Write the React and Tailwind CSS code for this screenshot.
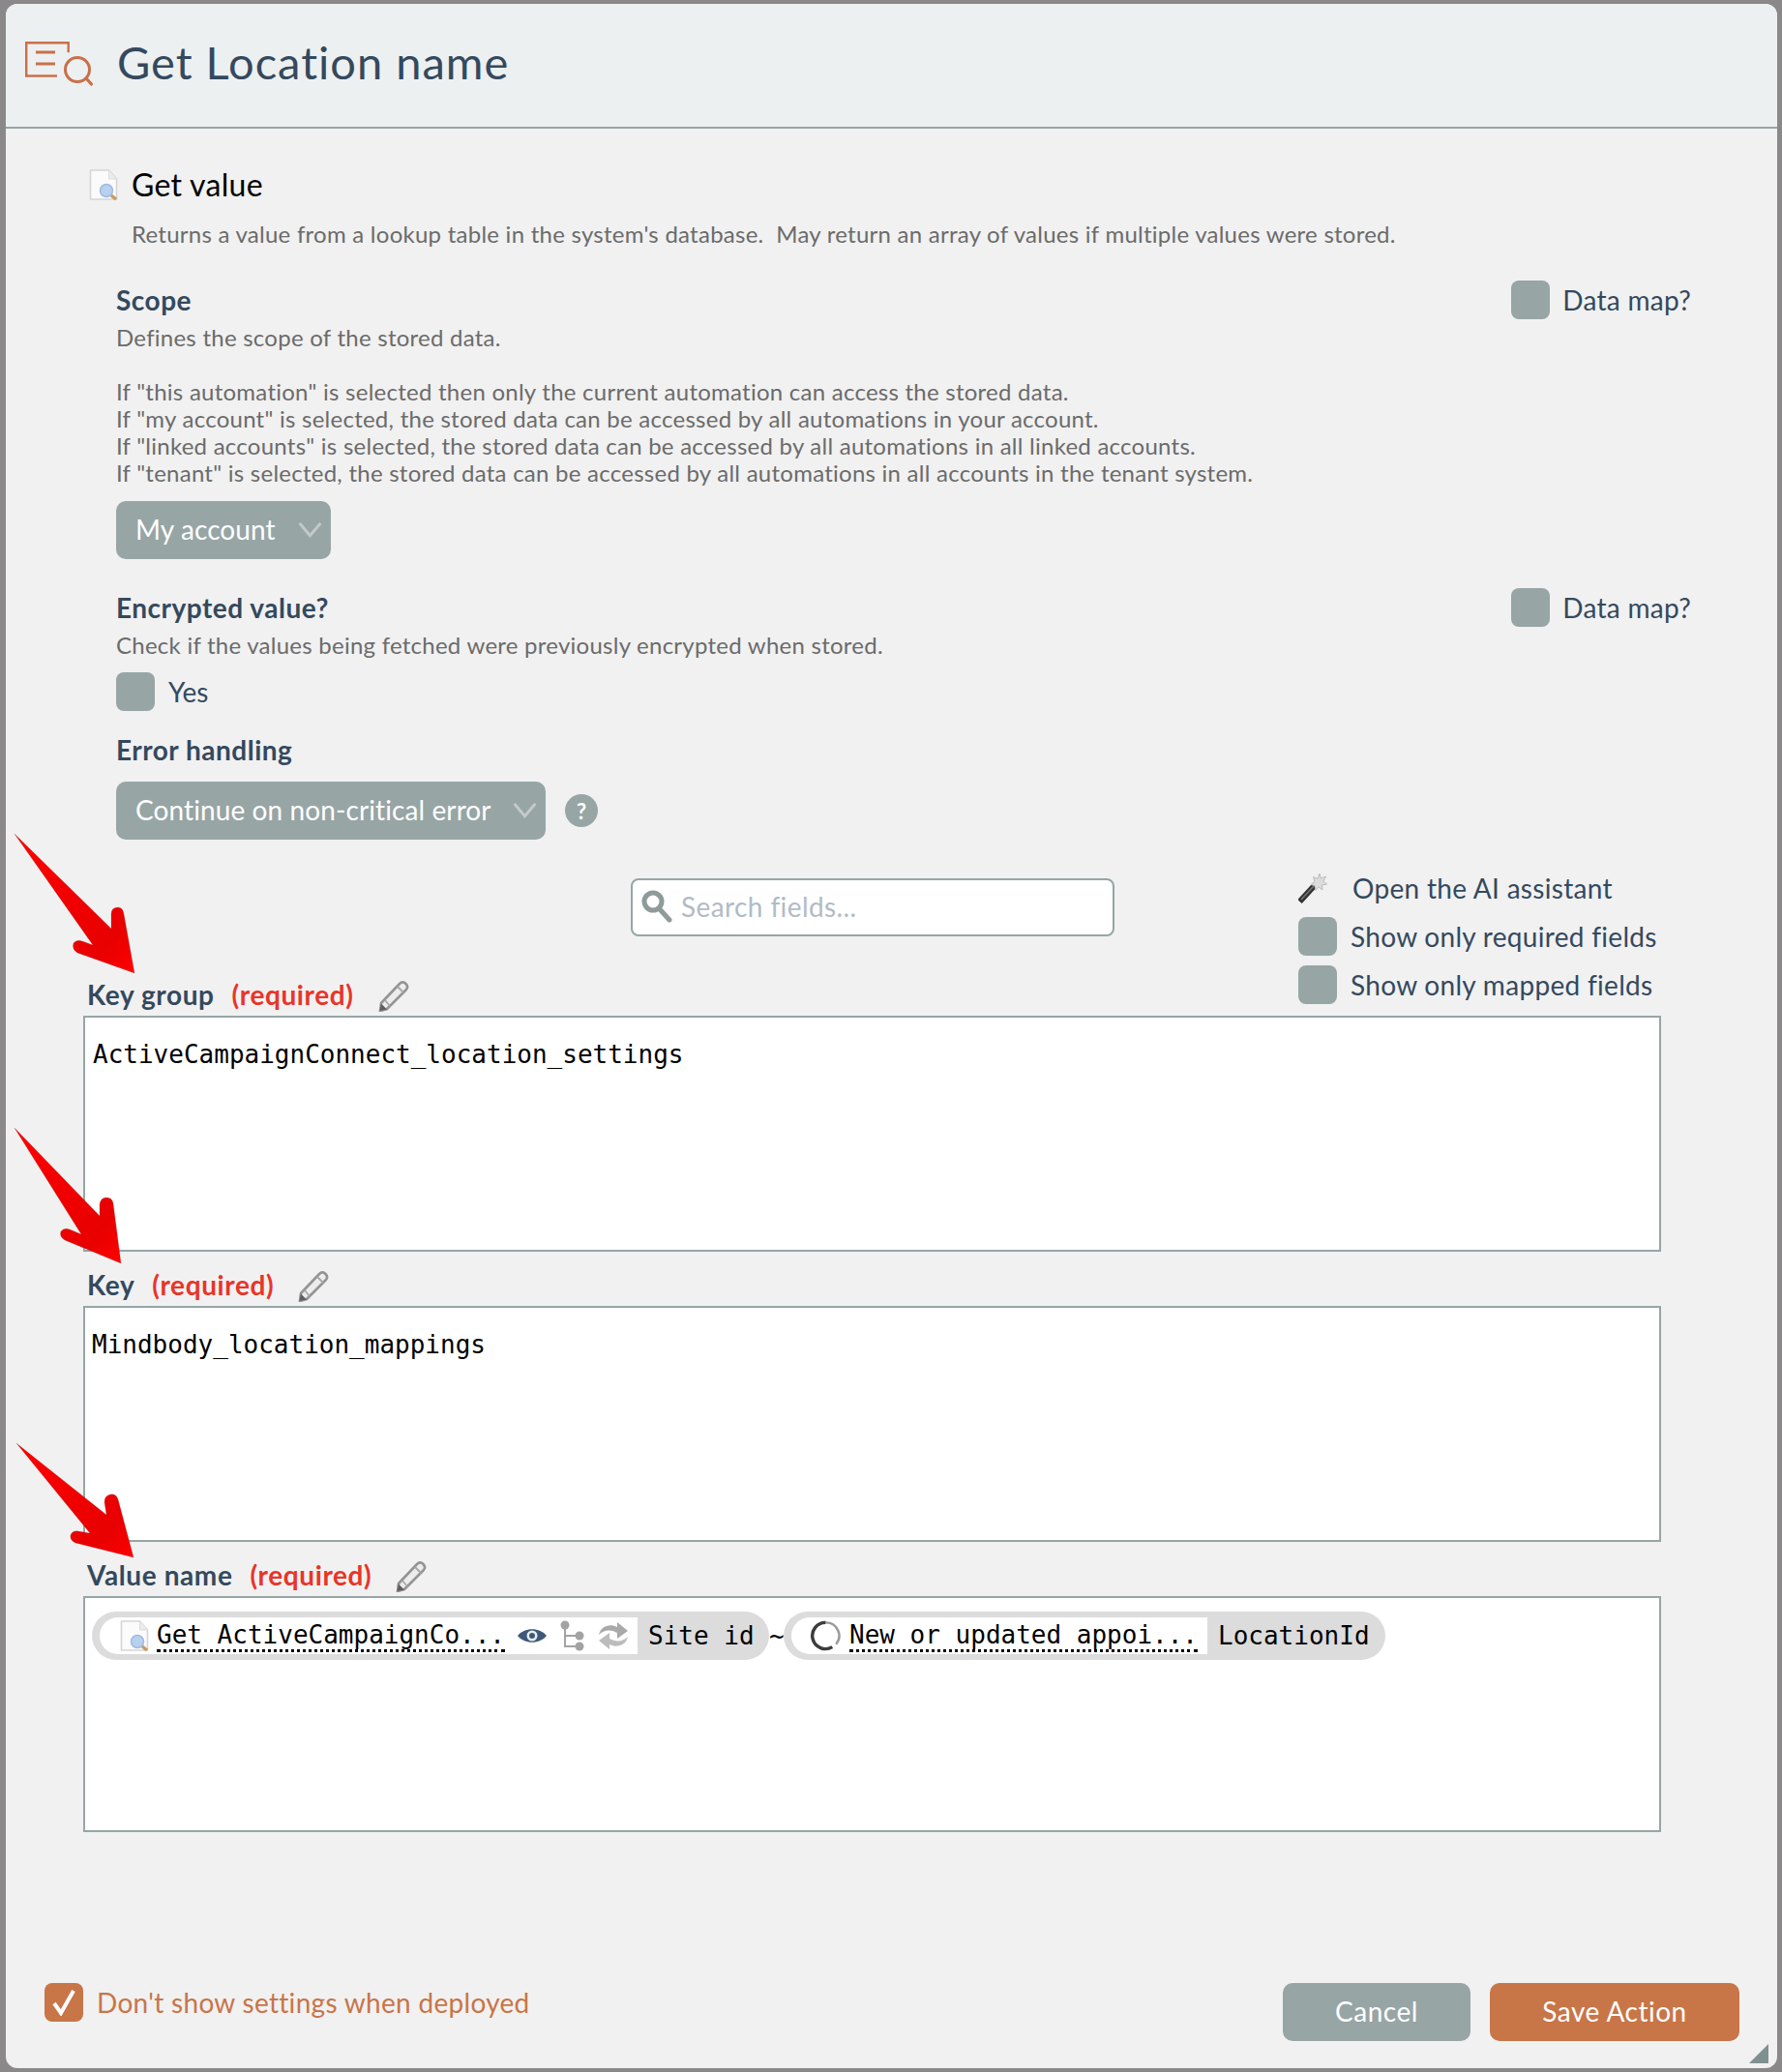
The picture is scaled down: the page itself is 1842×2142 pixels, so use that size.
import React from 'react';

const SANS = { fontFamily: 'Lato, sans-serif' };

// Small document with magnifier, used for the "Get value" action
const DocIcon = ({ className }) => (
    <svg viewBox="0 0 30 32" className={className}>
        <path d="M1.5 1h19l8 9v21h-27z" fill="#fbfbfb" stroke="#d5d5d5" strokeWidth="1.6" />
        <path d="M20.5 1v9h8" fill="#ececec" stroke="#dcdcdc" strokeWidth="1" />
        <circle cx="18" cy="22" r="6.5" fill="#b9d0ee" stroke="#9dbbe3" strokeWidth="1.5" />
        <path d="M23 27l5 4" stroke="#c89a5f" strokeWidth="3.5" />
    </svg>
);

const PencilIcon = () => (
    <svg viewBox="0 0 32 32" className="w-[32px] h-[32px] ml-[25px] mt-[4px] shrink-0">
        <path d="M3 23L22 3c2-2 4.500-2 6.500 0s2 4.500 0 6.500L9 29l-7 2z" fill="#ececec" stroke="#949494" strokeWidth="2.600" />
        <path d="M20 6l6 6M7 20l5 6" stroke="#a8a8a8" strokeWidth="1.800" />
        <path d="M1.500 31l1.500-7.500 6 6z" fill="#5f5f5f" />
    </svg>
);

const Check = () => <span className="w-[40px] h-[40px] rounded-[8px] bg-[#97a5a5] shrink-0 block" />;

const Chevron = ({ className }) => (
    <svg viewBox="0 0 26 18" className={className} fill="none" stroke="#c4c9c9" strokeWidth="3.2">
        <path d="M1.500 2L13 15.500 24.500 2" />
    </svg>
);

// paths are in page coordinates, the viewBox picks the region
const Arrow = ({ className, viewBox, d }) => (
    <svg viewBox={viewBox} className={className}>
        <defs>
            <linearGradient id="arrowRed" x1="0" y1="0" x2="1" y2="1">
                <stop offset="0" stopColor="#ff0000" />
                <stop offset="0.78" stopColor="#e80000" />
                <stop offset="1" stopColor="#ff0000" />
            </linearGradient>
        </defs>
        <path d={d} fill="url(#arrowRed)" stroke="#7a2a2a" strokeOpacity="0.35" strokeWidth="0.6" />
    </svg>
);

const FieldLabel = ({ name }) => (
    <div className="flex items-center h-[32px] mb-[6px] pl-[4px] text-[28px] font-bold tracking-[0.6px] text-[#34495e]">
        <span>{name}</span>
        <span className="ml-[18px] text-[#e8352a]">(required)</span>
        <PencilIcon />
    </div>
);

const FieldBox = ({ children }) => (
    <div className="h-[244px] border-2 border-[#97a5a5] bg-white px-[7px] pt-[14px] text-[26px] leading-[38px] text-black" style={{ fontFamily: '"DejaVu Sans Mono", monospace' }}>
        {children}
    </div>
);

const Ref = ({ icon, title, extras, value, className, whiteWidth, iconPad }) => (
    <span className={`flex items-center h-[50px] rounded-full bg-[#dcdcdc] pl-[8px] shrink-0 ${className}`}>
        <span className={`flex items-center h-[38px] bg-white rounded-l-full ${whiteWidth} ${iconPad}`}>
            {icon}
            <span className="border-b-[3px] border-dotted border-black leading-[28px] h-[32px] mt-[2px] ml-[8px] whitespace-pre">{title}</span>
            {extras}
        </span>
        <span className="ml-[11px]">{value}</span>
    </span>
);

const App = () => {
    return (
        <div className="h-[2142px] bg-[#8a8888] pl-[6px] pr-[5px] pt-[4px] pb-[4px]" style={SANS}>
            <div className="relative h-full rounded-[12px] bg-[#f1f1f1] flex flex-col overflow-hidden">
                {/* Header */}
                <div className="h-[129px] shrink-0 bg-[#edf0f1] border-b-2 border-[#97a5a5] flex items-center pl-[20px] pb-[6px]">
                    <svg viewBox="0 0 70 46" className="w-[70px] h-[46px] mt-[2px]" fill="none" stroke="#c8704a" strokeWidth="2.4">
                        <path d="M33 35.500H1.200V1.200h43.500v10" />
                        <path d="M11 11h20M11 23h20" strokeWidth="3" />
                        <circle cx="54" cy="29" r="12.500" strokeWidth="3" />
                        <path d="M63 38l6.500 7" strokeWidth="3.200" />
                    </svg>
                    <h1 className="ml-[25px] text-[47px] font-normal text-[#34495e] tracking-[1px]">Get Location name</h1>
                </div>

                {/* Body */}
                <div className="flex-1 pl-[80px] pr-[120px]">
                    <div className="flex items-center h-[32px] mt-[42px] ml-[6px] text-[32px] tracking-[0.3px] text-black">
                        <DocIcon className="w-[30px] h-[32px]" />
                        <span className="ml-[14px]">Get value</span>
                    </div>
                    <p className="ml-[50px] mt-[19px] h-[32px] text-[24px] leading-[32px] tracking-[0.25px] text-[#6b6b6b] whitespace-pre-wrap">Returns a value from a lookup table in the system's database.  May return an array of values if multiple values were stored.</p>

                    <div className="ml-[34px] mr-[-31px]">
                        <div className="flex justify-between items-center h-[40px] mt-[32px]">
                            <span className="text-[28px] font-bold tracking-[0.5px] text-[#34495e]">Scope</span>
                            <span className="flex items-center gap-[13px] text-[28px] tracking-[0.3px] text-[#34495e]"><Check />Data map?</span>
                        </div>
                        <p className="mt-[5px] text-[24px] leading-[28px] tracking-[0.25px] text-[#6b6b6b]">Defines the scope of the stored data.</p>
                        <div className="mt-[28px] text-[24px] leading-[28px] tracking-[0.25px] text-[#6b6b6b]">
                            <p>If "this automation" is selected then only the current automation can access the stored data.</p>
                            <p>If "my account" is selected, the stored data can be accessed by all automations in your account.</p>
                            <p>If "linked accounts" is selected, the stored data can be accessed by all automations in all linked accounts.</p>
                            <p>If "tenant" is selected, the stored data can be accessed by all automations in all accounts in the tenant system.</p>
                        </div>
                        <div className="flex items-center justify-between w-[222px] h-[60px] mt-[15px] rounded-[10px] bg-[#97a5a5] pl-[20px] pr-[9px] pb-[2px] text-[28px] tracking-[0.1px] text-white">
                            My account <Chevron className="w-[25px] h-[17px]" />
                        </div>

                        <div className="flex justify-between items-center h-[40px] mt-[30px]">
                            <span className="text-[28px] font-bold tracking-[0.5px] text-[#34495e]">Encrypted value?</span>
                            <span className="flex items-center gap-[13px] text-[28px] tracking-[0.3px] text-[#34495e]"><Check />Data map?</span>
                        </div>
                        <p className="mt-[5px] text-[24px] leading-[28px] tracking-[0.25px] text-[#6b6b6b]">Check if the values being fetched were previously encrypted when stored.</p>
                        <div className="flex items-center gap-[14px] mt-[14px] h-[40px] text-[28px] text-[#34495e]"><Check />Yes</div>

                        <div className="mt-[20px] h-[40px] flex items-center text-[28px] font-bold tracking-[0.5px] text-[#34495e]">Error handling</div>
                        <div className="flex items-center mt-[13px]">
                            <div className="flex items-center justify-between w-[444px] h-[60px] rounded-[10px] bg-[#97a5a5] pl-[20px] pr-[9px] pb-[2px] text-[28px] tracking-[0.1px] text-white">
                                Continue on non-critical error <Chevron className="w-[25px] h-[17px]" />
                            </div>
                            <span className="ml-[20px] w-[34px] h-[34px] rounded-full bg-[#97a5a5] text-white text-[22px] font-bold flex items-center justify-center">?</span>
                        </div>
                    </div>

                    {/* Filters and first label */}
                    <div className="flex justify-between h-[152px] mt-[30px]">
                        <div className="flex flex-col justify-between">
                            <div className="ml-[566px] mt-[10px] flex items-center w-[500px] h-[60px] rounded-[8px] border-2 border-[#97a5a5] bg-white pl-[9px] pb-[2px] text-[28px] tracking-[0.4px] text-[#b1bbc6]">
                                <svg viewBox="0 0 32 34" className="w-[32px] h-[34px]" fill="none">
                                    <circle cx="12" cy="12" r="9" stroke="#8f9a9a" strokeWidth="5" />
                                    <path d="M19 20l10 11" stroke="#8f9a9a" strokeWidth="5" strokeLinecap="round" />
                                </svg>
                                <span className="ml-[9px]">Search fields...</span>
                            </div>
                            <FieldLabel name="Key group" />
                        </div>
                        <div className="text-[28px] tracking-[0.3px] text-[#34495e] w-[375px] shrink-0">
                            <div className="flex items-center h-[40px]">
                                <svg viewBox="0 0 30 32" className="w-[30px] h-[32px]">
                                    <path d="M1.500 30L18 12" stroke="#333" strokeWidth="6" />
                                    <path d="M3 28L16 14" stroke="#777" strokeWidth="1.500" />
                                    <path d="M22 1l1.500 5 5-2-2.500 5 3.500 3-5 1 .5 5-4-3-3 3.500-1-5-4-1 4-3-1.500-5 4.500 2z" fill="#dcdcdc" stroke="#bdbdbd" strokeWidth="1" />
                                </svg>
                                <span className="ml-[26px]">Open the AI assistant</span>
                            </div>
                            <div className="flex items-center gap-[14px] h-[40px] mt-[10px]"><Check />Show only required fields</div>
                            <div className="flex items-center gap-[14px] h-[40px] mt-[10px]"><Check />Show only mapped fields</div>
                        </div>
                    </div>

                    {/* Fields */}
                    <FieldBox><div className="ml-[1px] mt-[5px]">ActiveCampaignConnect_location_settings</div></FieldBox>
                    <div className="mt-[18px]">
                        <FieldLabel name="Key" />
                        <FieldBox><div className="mt-[5px]">Mindbody_location_mappings</div></FieldBox>
                    </div>
                    <div className="mt-[18px]">
                        <FieldLabel name="Value name" />
                        <FieldBox>
                            <div className="flex items-center">
                                <Ref
                                    className="w-[700px]"
                                    whiteWidth="w-[556px]"
                                    iconPad="pl-[21px]"
                                    icon={<DocIcon className="w-[30px] h-[34px] shrink-0" />}
                                    title="Get ActiveCampaignCo..."
                                    extras={
                                        <span className="flex items-center">
                                            <svg viewBox="0 0 32 20" className="w-[32px] h-[20px] ml-[12px]">
                                                <path d="M1 10C8 1 24 1 31 10 24 19 8 19 1 10z" fill="#3f5878" />
                                                <circle cx="16" cy="10" r="5.500" fill="#e8edf3" />
                                                <circle cx="16" cy="10" r="3" fill="#3f5878" />
                                            </svg>
                                            <svg viewBox="0 0 26 32" className="w-[26px] h-[32px] ml-[13px]" fill="#a3a3a3">
                                                <path d="M5 5v22h14M5 16h14" fill="none" stroke="#a3a3a3" strokeWidth="2" />
                                                <circle cx="5" cy="5" r="4.500" />
                                                <circle cx="20" cy="16" r="4.500" />
                                                <circle cx="20" cy="27" r="4.500" />
                                            </svg>
                                            <svg viewBox="0 0 32 32" className="w-[32px] h-[32px] ml-[13px]">
                                                <path d="M1 15C3 6 12 3 20 7V2l11 9-11 8v-6C13 9 6 10 1 15z" fill="#a9a9a9" />
                                                <path d="M31 17c-2 9-11 12-19 8v5L1 21l11-8v6c7 4 14 3 19-2z" fill="#bcbcbc" />
                                            </svg>
                                        </span>
                                    }
                                    value="Site id"
                                />
                                <span className="w-[15px] text-center shrink-0">~</span>
                                <Ref
                                    className="w-[622px]"
                                    whiteWidth="w-[430px]"
                                    iconPad="pl-[19px]"
                                    icon={
                                        <svg viewBox="0 0 34 36" className="w-[33px] h-[36px] shrink-0" fill="none">
                                            <path d="M17 4A14 14 0 0 1 28 27" stroke="#9a9a9a" strokeWidth="2.500" />
                                            <path d="M17 4A14 14 0 1 0 24 30" stroke="#3c3c3c" strokeWidth="3.500" />
                                        </svg>
                                    }
                                    title="New or updated appoi..."
                                    value="LocationId"
                                />
                            </div>
                        </FieldBox>
                    </div>
                </div>

                {/* Footer */}
                <div className="flex items-start justify-between h-[88px] shrink-0 pl-[40px] pr-[39px]">
                    <div className="flex items-center gap-[14px] text-[28px] tracking-[0.3px] text-[#c87548] h-[40px]">
                        <span className="w-[40px] h-[40px] rounded-[8px] bg-[#c87548] flex items-center justify-center">
                            <svg viewBox="0 0 24 28" className="w-[24px] h-[28px]" fill="none" stroke="white" strokeWidth="4">
                                <path d="M2 15l7 10L22 2" />
                            </svg>
                        </span>
                        Don't show settings when deployed
                    </div>
                    <div className="flex gap-[20px] text-[28px] tracking-[0.5px] text-white">
                        <span className="w-[194px] h-[60px] rounded-[10px] bg-[#97a5a5] flex items-center justify-center pb-[2px]">Cancel</span>
                        <span className="w-[258px] h-[60px] rounded-[10px] bg-[#c87548] flex items-center justify-center pb-[2px]">Save Action</span>
                    </div>
                </div>

                {/* Resize grip */}
                <svg viewBox="0 0 20 20" className="absolute right-[9px] bottom-[5px] w-[20px] h-[20px]"><path d="M20 0v20H0z" fill="#7f9090" /></svg>

                {/* Annotation arrows */}
                <Arrow
                    className="absolute left-0 top-[851px] w-[140px] h-[160px]"
                    viewBox="6 855 140 160"
                    d="M15,862 L115,960 L115,945 Q115,938 122,938 Q127,938 128,945 L139,1006 L80,985 Q74,981 76,975 Q79,971 85,973 L96,977 Z"
                />
                <Arrow
                    className="absolute left-0 top-[1156px] w-[140px] h-[160px]"
                    viewBox="6 1160 140 160"
                    d="M15,1166 L103,1257 L103,1245 Q104,1238 110,1238 Q116,1238 117,1244 L125,1306 L67,1282 Q61,1278 63,1273 Q66,1269 72,1271 L84,1276 Z"
                />
                <Arrow
                    className="absolute left-0 top-[1481px] w-[140px] h-[140px]"
                    viewBox="6 1485 140 140"
                    d="M17,1492 L110,1566 L108,1553 Q108,1546 114,1545 Q120,1544 122,1550 L138,1610 L78,1595 Q72,1592 73,1587 Q75,1582 81,1583 L93,1585 Z"
                />
            </div>
        </div>
    );
};

export default App;
